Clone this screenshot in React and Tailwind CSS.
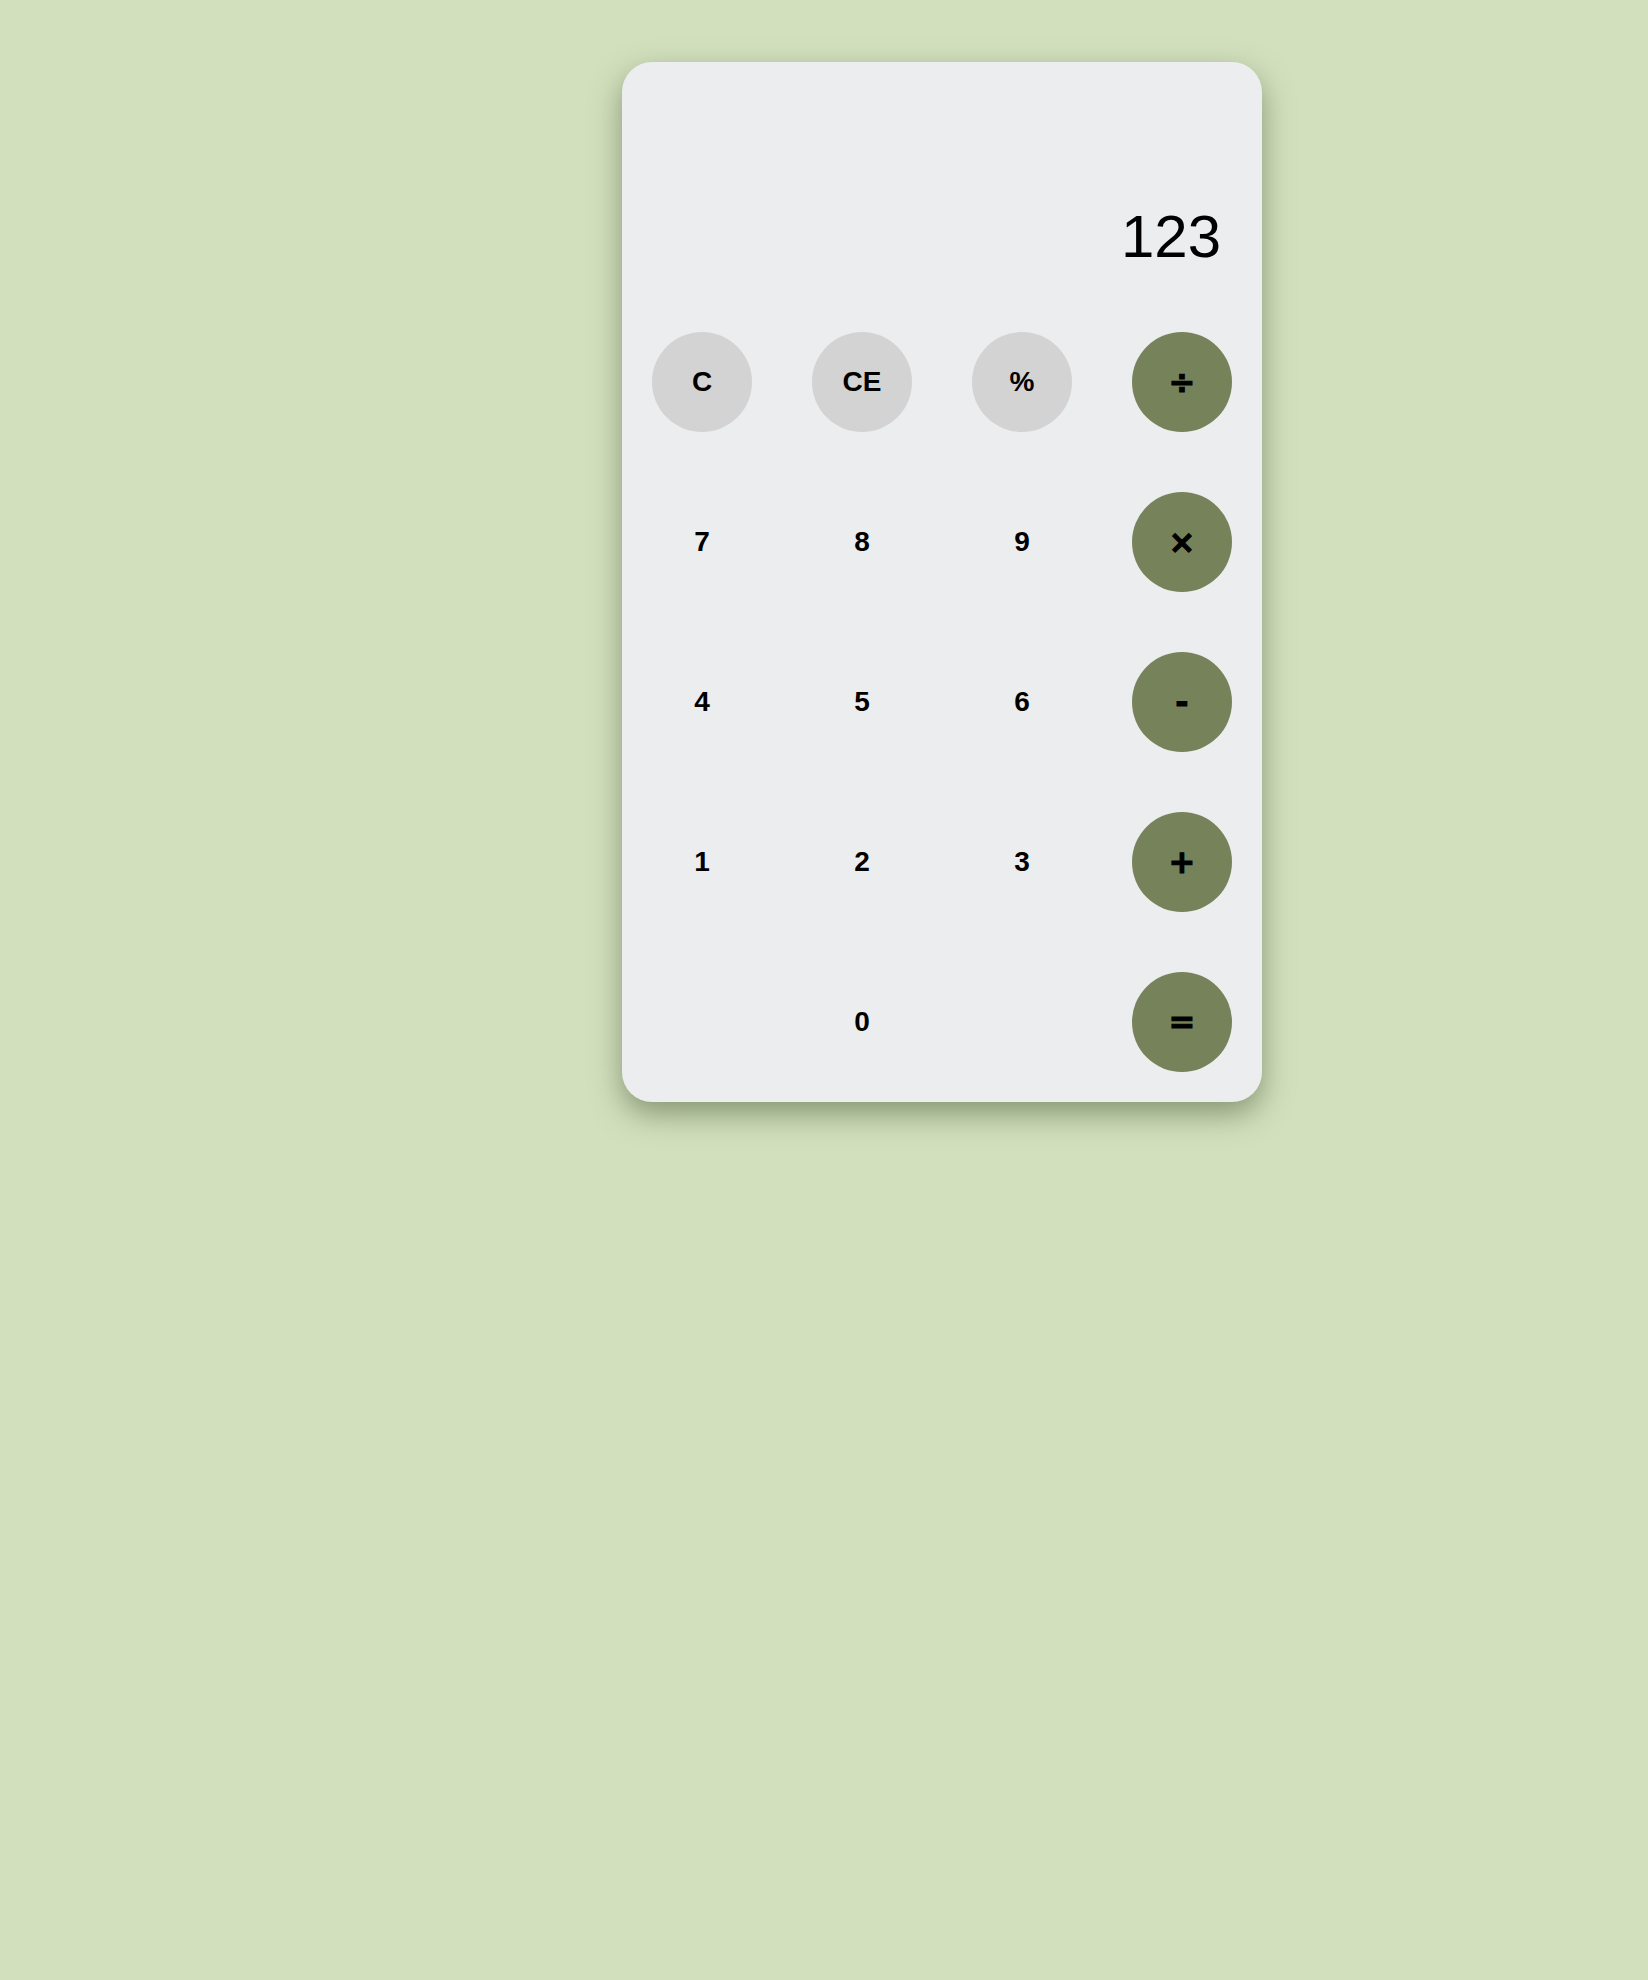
export default function App() {
  const rows = [
    [{ t: "C", k: "g" }, { t: "CE", k: "g" }, { t: "%", k: "g" }, { t: "÷", k: "o" }],
    [{ t: "7" }, { t: "8" }, { t: "9" }, { t: "×", k: "o" }],
    [{ t: "4" }, { t: "5" }, { t: "6" }, { t: "-", k: "o" }],
    [{ t: "1" }, { t: "2" }, { t: "3" }, { t: "+", k: "o" }],
    [{ t: "" }, { t: "0" }, { t: "" }, { t: "=", k: "o" }],
  ];
  return (
    <div className="min-h-[1980px] w-full bg-[#d3e0be]" style={{ fontFamily: '"Liberation Sans", Arial, sans-serif' }}>
      <div className="pt-[62px] pl-[622px]">
        <div className="w-[640px] rounded-[30px] bg-[#ecedef] shadow-[0_12px_30px_rgba(60,80,40,0.5)] overflow-hidden">
          <div className="h-[240px] flex items-end justify-end pr-[41px] pb-[32px]">
            <span className="text-[60px] leading-[67px] text-black">123</span>
          </div>
          <div className="grid grid-cols-4">
            {rows.flat().map((b, i) => (
              <div key={i} className="h-[160px] flex items-center justify-center">
                {b.t !== "" && (
                  <button
                    className={
                      "w-[100px] h-[100px] rounded-full flex items-center justify-center font-bold text-black " +
                      (b.k === "g"
                        ? "bg-[#d3d3d3] text-[28px]"
                        : b.k === "o"
                        ? "bg-[#76835a] text-[32px] font-['DejaVu_Sans',sans-serif] [-webkit-text-stroke:1px_black]"
                        : "bg-transparent text-[28px]")
                    }
                  >
                    {b.t}
                  </button>
                )}
              </div>
            ))}
          </div>
        </div>
      </div>
    </div>
  );
}
